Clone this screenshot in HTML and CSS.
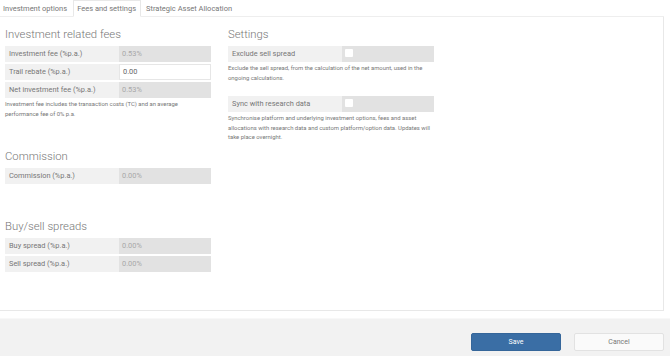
FILE: index.html
```html
<!DOCTYPE html>
<html lang="en">
<head>
  <meta charset="UTF-8" />
  <title>Fees and settings</title>
  <link rel="stylesheet" href="styles.css">
</head>
<body>
  <div class="tabs">
    <div class="tab">Investment options</div>
    <div class="tab active">Fees and settings</div>
    <div class="tab">Strategic Asset Allocation</div>
  </div>
  <div class="panel">
    <div class="col">
      <h2>Investment related fees</h2>
      <div class="row"><div class="label">Investment fee (%p.a.)</div><div class="value">0.53%</div></div>
      <div class="row"><div class="label">Trail rebate (%p.a.)</div><div class="value edit">0.00</div></div>
      <div class="row"><div class="label">Net investment fee (%p.a.)</div><div class="value">0.53%</div></div>
      <p class="note">Investment fee includes the transaction costs (TC) and an average performance fee of 0% p.a.</p>

      <h2 class="gap-commission">Commission</h2>
      <div class="row"><div class="label">Commission (%p.a.)</div><div class="value">0.00%</div></div>

      <h2 class="gap-spreads">Buy/sell spreads</h2>
      <div class="row"><div class="label">Buy spread (%p.a.)</div><div class="value">0.00%</div></div>
      <div class="row"><div class="label">Sell spread (%p.a.)</div><div class="value">0.00%</div></div>
    </div>
    <div class="col right">
      <h2>Settings</h2>
      <div class="row"><div class="label">Exclude sell spread</div><div class="value"><span class="check"></span></div></div>
      <p class="note">Exclude the sell spread, from the calculation of the net amount, used in the ongoing calculations.</p>
      <div class="row sync"><div class="label">Sync with research data</div><div class="value"><span class="check"></span></div></div>
      <p class="note">Synchronise platform and underlying investment options, fees and asset allocations with research data and custom platform/option data. Updates will take place overnight.</p>
    </div>
  </div>
  <div class="footer">
    <button class="btn save">Save</button>
    <button class="btn cancel">Cancel</button>
  </div>
</body>
</html>
```

FILE: styles.css
```css
body {
  margin: 0;
  width: 670px;
  height: 356px;
  overflow: hidden;
  font-family: Roboto, "Liberation Sans", sans-serif;
  color: #666;
  background: #fff;
}
.tabs {
  display: flex;
  height: 17px;
  border-bottom: 1px solid #eee;
  width: 664px;
  box-sizing: border-box;
}
.tab {
  font-size: 7.5px;
  line-height: 17px;
  padding: 0 4px 0 3px;
  color: #777;
}
.tab.active {
  border: 1px solid #e8e8e8;
  border-bottom: 1px solid #fff;
  background: #fff;
  line-height: 15px;
  height: 17px;
  box-sizing: border-box;
  margin-left: 2px;
  margin-right: 2px;
}
.panel {
  display: flex;
  width: 664px;
  height: 294px;
  box-sizing: border-box;
  border-right: 1px solid #e8e8e8;
  border-bottom: 1px solid #e8e8e8;
  padding: 0 0 0 5px;
}
.col {
  width: 206px;
}
.col.right {
  margin-left: 17px;
}
h2 {
  font-size: 11.3px;
  font-weight: 300;
  color: #777;
  margin: 11px 0 4px;
  line-height: 14px;
}
.row {
  display: flex;
  height: 16px;
  margin-bottom: 2px;
  font-size: 7.4px;
  line-height: 16px;
}
.label {
  width: 110px;
  padding-left: 4px;
  background: #f1f1f1;
  color: #777;
}
.value {
  flex: 1;
  background: #e2e2e2;
  color: #a8a8a8;
  padding-left: 3px;
}
.value.edit {
  background: #fff;
  border: 1px solid #e6e6e6;
  color: #666;
  line-height: 14px;
}
.check {
  display: inline-block;
  width: 8px;
  height: 8px;
  background: #fff;
  border-radius: 1px;
  vertical-align: middle;
  margin-top: -2px;
}
.note {
  font-size: 5.9px;
  line-height: 9.5px;
  margin: 0;
  color: #777;
}
.gap-commission {
  margin-top: 31px;
}
.gap-spreads {
  margin-top: 36px;
}
.row.sync {
  margin-top: 13px;
}
.footer {
  margin-top: 7px;
  border-top: 1px solid #f8f8f8;
  background: #f2f2f2;
  height: 40px;
  display: flex;
  justify-content: flex-end;
  align-items: center;
  padding-right: 6px;
  gap: 13px;
}
.btn {
  width: 90px;
  height: 18px;
  font-family: inherit;
  font-size: 7px;
  border-radius: 2px;
  margin-top: 6px;
}
.save {
  background: #3a6ea5;
  color: #fff;
  border: 1px solid #35669a;
}
.cancel {
  background: #fafafa;
  color: #777;
  border: 1px solid #e2e2e2;
}
```
